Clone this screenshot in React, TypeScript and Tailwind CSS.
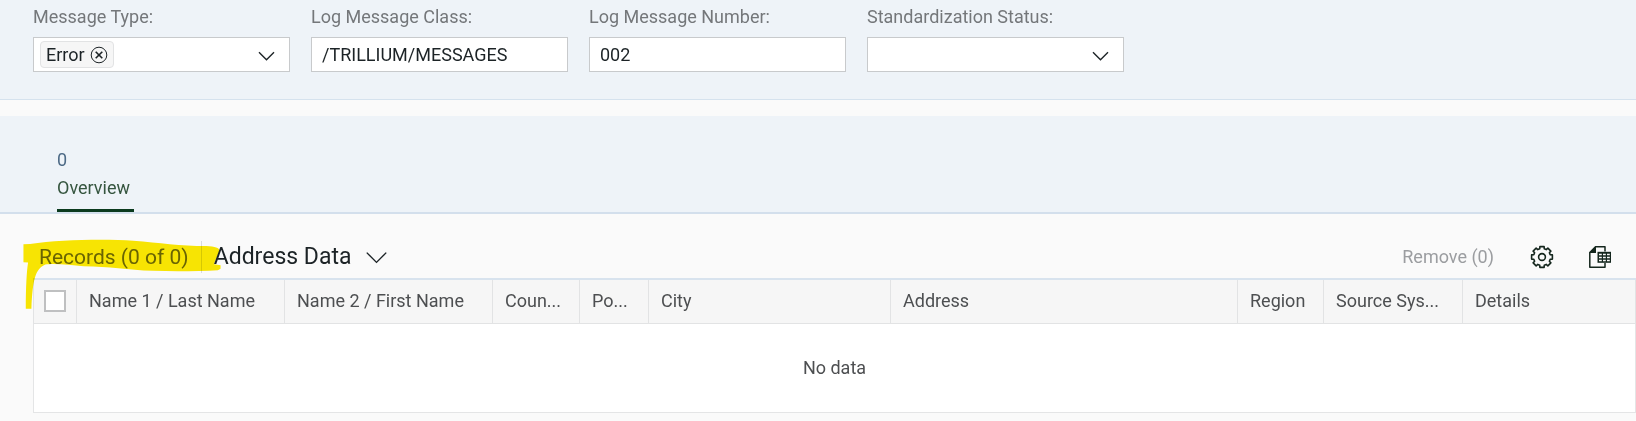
import React from "react";

function Chevron({ className }: { className: string }) {
  return (
    <svg viewBox="0 0 20 12" className={className} fill="none" stroke="currentColor" aria-hidden="true">
      <path d="M1 1.5 10 10.5 19 1.5" strokeWidth="1.4" vectorEffect="non-scaling-stroke" />
    </svg>
  );
}

function GearIcon() {
  const teeth = 8;
  const pts: string[] = [];
  for (let i = 0; i < teeth; i++) {
    const base = (i * 2 * Math.PI) / teeth;
    const at = (r: number, a: number) =>
      `${(12 + r * Math.cos(base + a)).toFixed(2)} ${(12 + r * Math.sin(base + a)).toFixed(2)}`;
    pts.push(`${at(8.5, -0.27)} L${at(10.6, -0.2)} L${at(10.6, 0.2)} L${at(8.5, 0.27)}`);
  }
  return (
    <svg viewBox="0 0 24 24" className="size-6" fill="none" stroke="currentColor" strokeWidth="1.6" strokeLinejoin="round" aria-hidden="true">
      <path d={`M${pts.join(" L")} Z`} />
      <circle cx="12" cy="12" r="3.4" />
    </svg>
  );
}

function SheetIcon() {
  return (
    <svg viewBox="0 0 24 24" className="size-6" fill="none" stroke="currentColor" aria-hidden="true">
      <path d="M17 6.5V1.8H7.5L1.8 7.5V22.2H17V18" strokeWidth="1.5" strokeLinejoin="round" />
      <path d="M8 1.2V8H1.2Z" fill="currentColor" stroke="none" />
      <path d="M9.5 6.8H23V17.8H9.5Z" fill="currentColor" stroke="none" />
      <path d="M11 9.6h2.8M15 9.6h2.8M19 9.6h2.8M11 12.6h2.8M15 12.6h2.8M19 12.6h2.8M11 15.6h2.8M15 15.6h2.8M19 15.6h2.8" stroke="#fafafa" strokeWidth="1.5" />
    </svg>
  );
}

function Field({ id, label, children }: { id: string; label: string; children: React.ReactNode }) {
  return (
    <div className="w-[257px] shrink-0">
      <label htmlFor={id} className="block text-lg leading-6 text-[#74777a]">
        {label}
      </label>
      <div className="relative mt-2 flex h-[35px] items-center border border-[#c8cacc] bg-white text-[#1c2326]">
        {children}
      </div>
    </div>
  );
}

const columns = [
  { name: "Name 1 / Last Name", width: "w-[208px]" },
  { name: "Name 2 / First Name", width: "w-[208px]" },
  { name: "Coun...", width: "w-[87px]" },
  { name: "Po...", width: "w-[69px]" },
  { name: "City", width: "w-[242px]" },
  { name: "Address", width: "w-[347px]" },
  { name: "Region", width: "w-[86px]" },
  { name: "Source Sys...", width: "w-[139px]" },
  { name: "Details", width: "" },
];

export default function App() {
  return (
    <div className="min-h-screen bg-[#fafafa] font-['Roboto','Liberation_Sans',sans-serif] text-lg text-[#4d4f51]">
      <section className="flex gap-[21px] border-b border-[#d5e2ee] bg-[#eef3f8] pt-[5px] pb-[27px] pl-[33px]">
        <Field id="message-type" label="Message Type:">
          <span className="ml-1.5 flex h-[27px] shrink-0 items-center gap-[5px] rounded-sm border border-[#e2e3e4] bg-[#f6f6f6] px-[5px]">
            Error
            <button type="button" aria-label="Remove Error">
              <svg viewBox="0 0 18 18" className="size-[18px]" fill="none" stroke="currentColor" aria-hidden="true">
                <circle cx="9" cy="9" r="7.8" strokeWidth="1" />
                <path d="m5.7 5.7 6.6 6.6m0-6.6-6.6 6.6" strokeWidth="1.6" />
              </svg>
            </button>
          </span>
          <select id="message-type" className="h-full min-w-0 flex-1 appearance-none bg-transparent outline-none">
            <option></option>
          </select>
          <Chevron className="pointer-events-none absolute top-[13px] right-3.5 h-[10px] w-[17px]" />
        </Field>
        <Field id="message-class" label="Log Message Class:">
          <input id="message-class" defaultValue="/TRILLIUM/MESSAGES" className="h-full w-full bg-transparent px-2.5 outline-none" />
        </Field>
        <Field id="message-number" label="Log Message Number:">
          <input id="message-number" defaultValue="002" className="h-full w-full bg-transparent px-2.5 outline-none" />
        </Field>
        <Field id="status" label="Standardization Status:">
          <select id="status" className="h-full w-full appearance-none bg-transparent outline-none">
            <option></option>
          </select>
          <Chevron className="pointer-events-none absolute top-[13px] right-3.5 h-[10px] w-[17px]" />
        </Field>
      </section>

      <nav className="mt-4 flex border-b-2 border-[#d3dfec] bg-[#eef3f8] pt-[30px] pl-[57px]">
        <a href="#overview" className="flex flex-col border-b-[3px] border-[#0b3a1e] pr-1 pb-[7px]">
          <span className="leading-7 text-[#4d6a86]">0</span>
          <span className="leading-7 text-[#35553f]">Overview</span>
        </a>
      </nav>

      <main className="pt-[22px] pl-[33px]">
        <div className="flex h-[42px] items-center pr-6 pl-1.5">
          <div className="relative flex items-center">
            <h2 className="text-[21px] leading-8 text-[#6a6d70]">Records (0 of 0)</h2>
            <span className="ml-3 h-8 w-px self-start bg-[#d9dbdd]" />
            <svg viewBox="69 50 600 220" className="pointer-events-none absolute -top-1 -left-4 h-[73px] w-[200px] mix-blend-multiply" aria-hidden="true">
              <path fill="#fce903" d="M69 72 89 71C180 57 320 56 400 61C480 67 540 77 620 77C650 79 662 84 659 92C655 105 644 125 644 132L663 135V146L655 150C600 153 530 154 460 152C380 149 330 139 250 138C210 134 160 128 135 133C104 146 97 180 93 266H76C76 200 79 150 83 127L69 126Z" />
            </svg>
          </div>
          <button type="button" className="ml-3 flex items-center gap-3.5 text-[23px] leading-8 text-[#1c2326]">
            Address Data
            <Chevron className="h-[13px] w-[23px]" />
          </button>
          <button type="button" disabled className="ml-auto text-lg text-[#9b9da0]">
            Remove (0)
          </button>
          <button type="button" aria-label="Settings" className="ml-9 text-[#14261d]">
            <GearIcon />
          </button>
          <button type="button" aria-label="Export to spreadsheet" className="ml-[34px] text-[#14261d]">
            <SheetIcon />
          </button>
        </div>
        <table className="w-full table-fixed border-collapse border border-[#e4e5e6] border-t-2 border-t-[#d8e3ee]">
          <thead>
            <tr className="h-[44px] bg-[#f6f6f6]">
              <th className="w-[43px] border border-[#e2e3e4] border-t-[#d8e3ee] p-0">
                <input type="checkbox" aria-label="Select all" className="mx-auto block size-[22px] appearance-none border-2 border-[#bfc0c1] bg-white" />
              </th>
              {columns.map((c) => (
                <th key={c.name} scope="col" className={`truncate border border-[#e2e3e4] border-t-[#d8e3ee] px-3 text-left font-normal ${c.width}`}>
                  {c.name}
                </th>
              ))}
            </tr>
          </thead>
          <tbody>
            <tr className="h-[89px] bg-white">
              <td colSpan={10} className="text-center">
                No data
              </td>
            </tr>
          </tbody>
        </table>
      </main>
    </div>
  );
}
